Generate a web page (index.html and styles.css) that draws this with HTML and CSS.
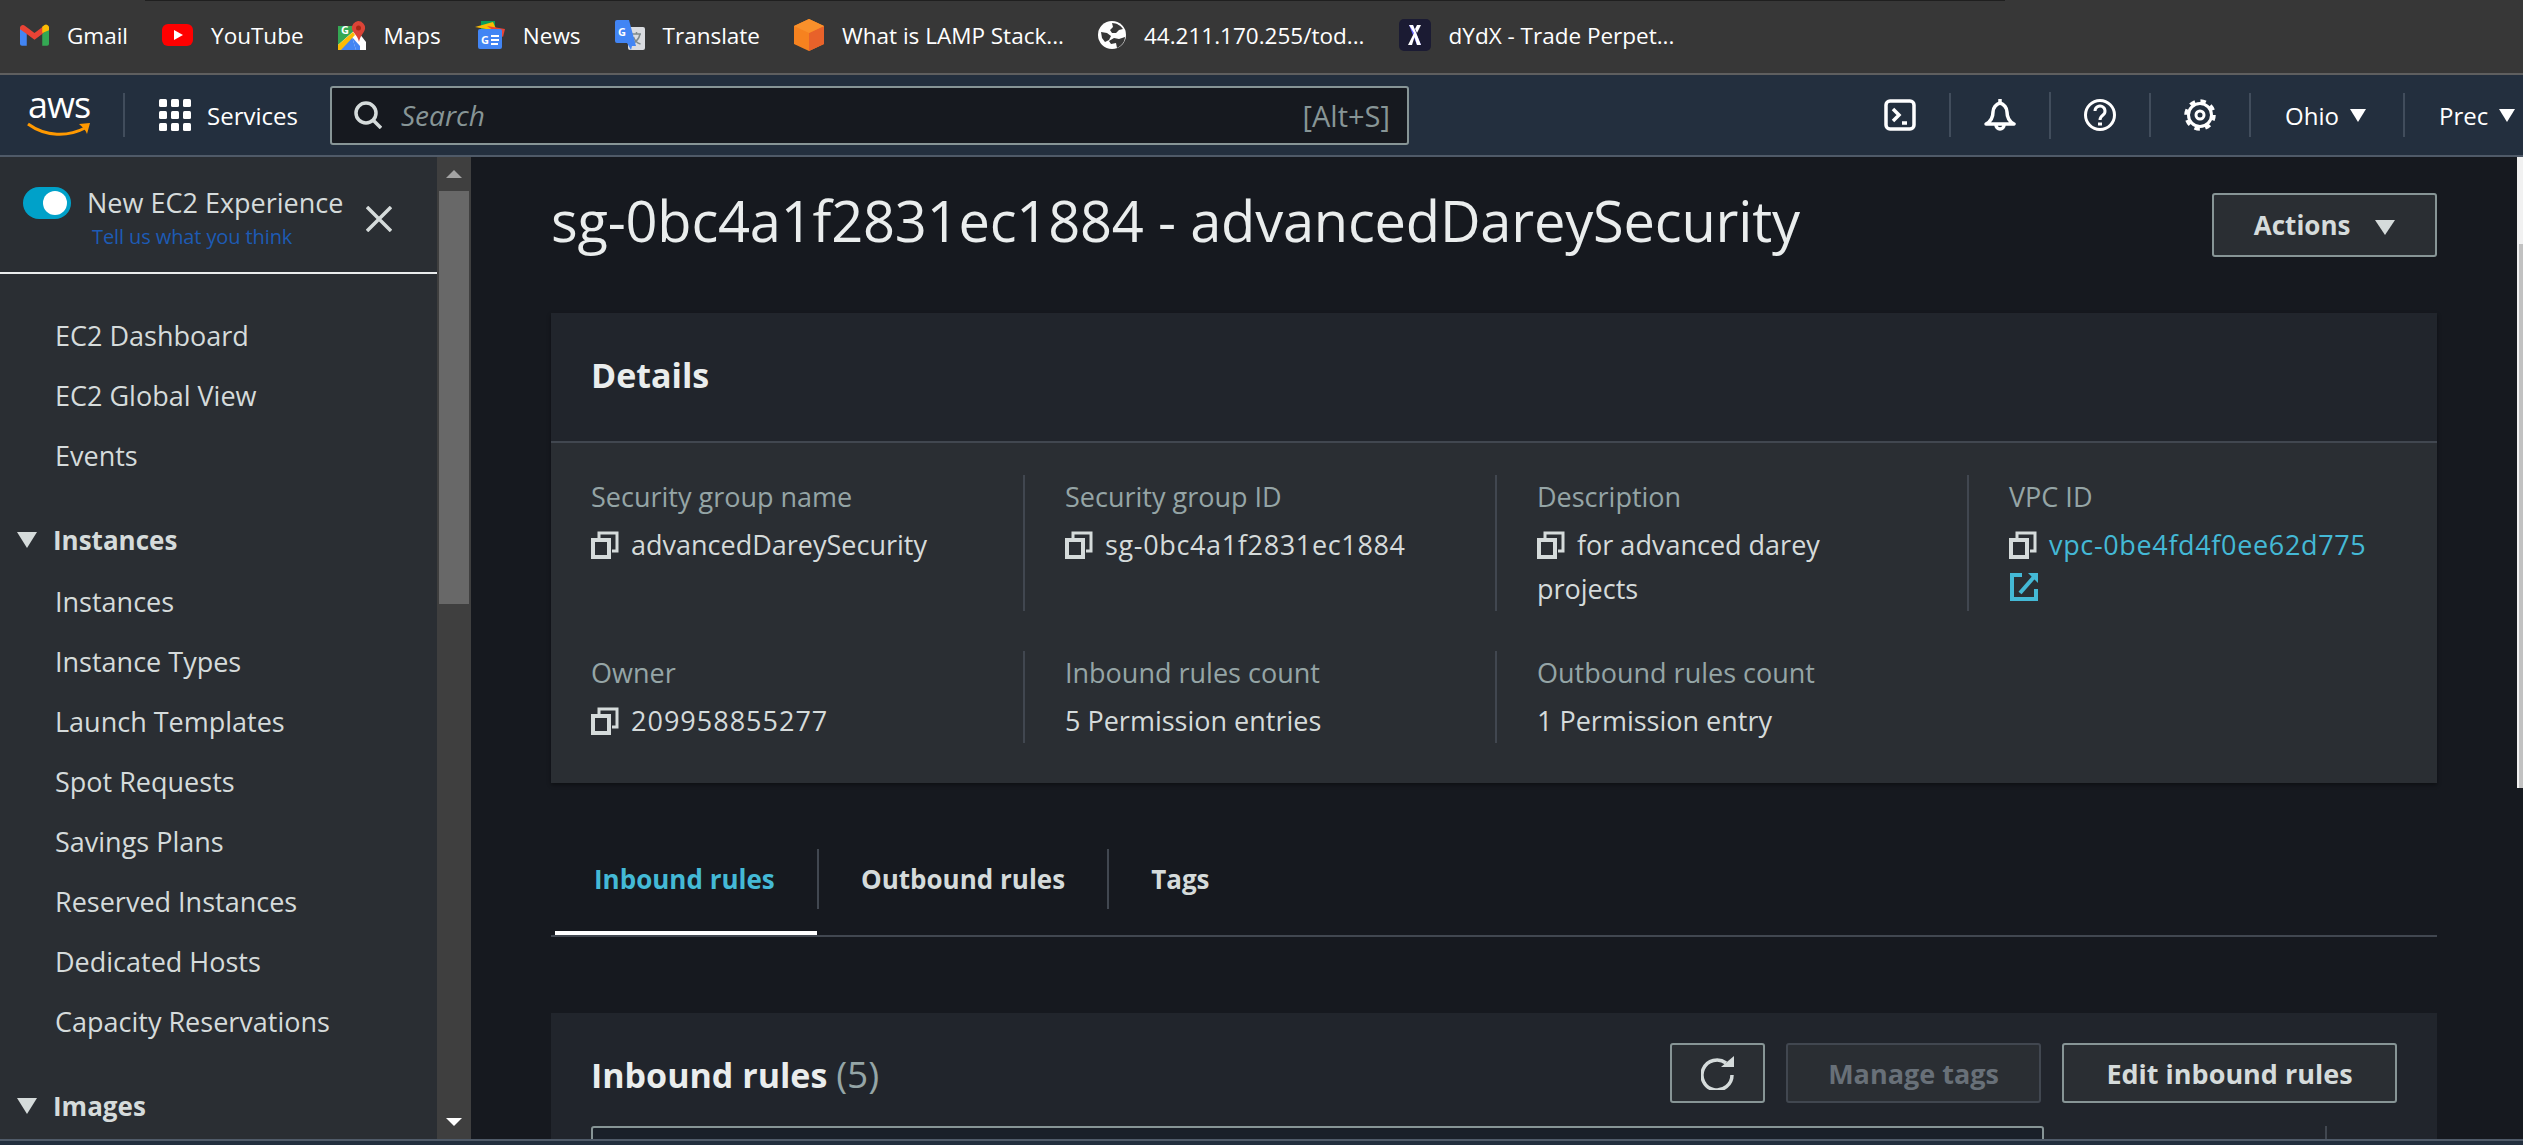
FILE: index.html
```html
<!DOCTYPE html>
<html lang="en">
<head>
<meta charset="UTF-8">
<meta name="viewport" content="width=device-width, initial-scale=1.0">
<title>Security group details</title>
<link rel="stylesheet" href="styles.css">
</head>
<body>
<div class="bookmarks">
    <a class="bookmark">
        <svg class="fav fav-gmail" viewBox="0 0 30 22"><path d="M0 3v17a2 2 0 0 0 2 2h5V8z" fill="#4285f4"/><path d="M23 8v14h5a2 2 0 0 0 2-2V3z" fill="#34a853"/><path d="M0 3.500a3 3 0 0 1 5-2L15 9l10-7.500a3 3 0 0 1 1 0V7l-3 3-8 6-8-6-7-5z" fill="#ea4335"/><path d="M23 9V2.500L25 1a3 3 0 0 1 5 2.500V6z" fill="#fbbc04"/></svg>
        <span>Gmail</span>
    </a>
    <a class="bookmark">
        <svg class="fav fav-yt" viewBox="0 0 31 22"><rect width="31" height="22" rx="6" fill="#f00"/><path d="M12 6l9 5-9 5z" fill="#fff"/></svg>
        <span>YouTube</span>
    </a>
    <a class="bookmark">
        <svg class="fav fav-maps" viewBox="0 0 28 29"><path d="M0 5h19v24H0z" fill="#34a853"/><path d="M0 29V24L18 8l10 13v8z" fill="#fff"/><path d="M0 29L14 16l4 13z" fill="#4285f4"/><path d="M18 29l-4-13 8 9v4z" fill="#4285f4"/><path d="M0 29v-5L15 11l2 3L3 29z" fill="#fbbc04"/><path d="M20 0a7 7 0 0 1 7 8c-1 4-5 7-6 13-1-6-6-9-7-13a7 7 0 0 1 6-8z" fill="#db4437"/><circle cx="20.500" cy="7" r="2.500" fill="#a52714"/><text x="3" y="13" class="fav-letter">G</text></svg>
        <span>Maps</span>
    </a>
    <a class="bookmark">
        <svg class="fav fav-news" viewBox="0 0 30 28"><path d="M6 0h14v8H6z" fill="#0c9d58"/><path d="M0 6l18-5 4 9z" fill="#fbbc04"/><path d="M12 5l18 3-2 8z" fill="#ea4335"/><rect x="3" y="8" width="24" height="20" rx="2" fill="#4285f4"/><text x="6" y="23" class="fav-letter">G</text><path d="M16 14h8v2h-8zM16 18h8v2h-8zM16 22h7v2h-7z" fill="#fff"/></svg>
        <span>News</span>
    </a>
    <a class="bookmark">
        <svg class="fav fav-translate" viewBox="0 0 30 30"><rect x="13" y="7" width="17" height="23" rx="2" fill="#dadce0"/><path d="M17 14h9M21.500 12v2M25 14c-1 5-4 8-8 10M18.500 17c1 3 3 6 7 7" stroke="#7f8a8c" fill="none" stroke-width="1.500"/><path d="M2 0h12l7 26h-4l-1 4-4-7H2a2 2 0 0 1-2-2V2a2 2 0 0 1 2-2z" fill="#4285f4"/><text x="3" y="16" class="fav-letter">G</text></svg>
        <span>Translate</span>
    </a>
    <a class="bookmark">
        <svg class="fav fav-lamp" viewBox="0 0 30 32"><path d="M15 0l15 7v18l-15 7L0 25V7z" fill="#f6821f"/><path d="M15 14l15-7v18l-15 7z" fill="#e8622a"/><path d="M15 0l15 7-15 7L0 7z" fill="#f9902b"/></svg>
        <span>What is LAMP Stack...</span>
    </a>
    <a class="bookmark">
        <svg class="fav fav-globe" viewBox="0 0 28 28"><circle cx="14" cy="14" r="14" fill="#fff"/><path d="M14 2c5 0 9 3 11 6l-4 1-3 3h-4l-2-3 3-3zM3 11l6 1 4 3-2 4-4 2-3-4zM27 16c0 5-4 9-8 11l-1-5-5 1-2-3 5-3 5 1z" fill="#373737"/></svg>
        <span>44.211.170.255/tod...</span>
    </a>
    <a class="bookmark">
        <svg class="fav fav-dydx" viewBox="0 0 32 32"><rect width="32" height="32" rx="5" fill="#1b1b33"/><path d="M10 6h4l8 20h-4z" fill="#6966ff"/><path d="M10 6h4l8 20h-4l-2.500-8L13 26H9l6-12z" fill="#fff"/><path d="M18 6h4l-4 8-2-4z" fill="#fff"/></svg>
        <span>dYdX - Trade Perpet...</span>
    </a>
</div>

<nav class="topnav">
    <div class="logo">
        <span class="logo-text">aws</span>
        <svg class="logo-smile" viewBox="0 0 64 14"><path d="M1 2c18 13 40 13 57 4" fill="none" stroke="#f90" stroke-width="3"/><path d="M52 2l11-1-3 11c-1-3-4-7-8-10z" fill="#f90"/></svg>
    </div>
    <div class="services">
        <svg class="grid-icon" viewBox="0 0 32 32" fill="#fff"><rect width="8" height="8" rx="1.500"/><rect x="12" width="8" height="8" rx="1.500"/><rect x="24" width="8" height="8" rx="1.500"/><rect y="12" width="8" height="8" rx="1.500"/><rect x="12" y="12" width="8" height="8" rx="1.500"/><rect x="24" y="12" width="8" height="8" rx="1.500"/><rect y="24" width="8" height="8" rx="1.500"/><rect x="12" y="24" width="8" height="8" rx="1.500"/><rect x="24" y="24" width="8" height="8" rx="1.500"/></svg>
        <span>Services</span>
    </div>
    <div class="search">
        <svg class="search-icon" viewBox="0 0 28 28"><circle cx="12" cy="12" r="10" fill="none" stroke="#d5dbdb" stroke-width="3.500"/><path d="M19 19l8 8" stroke="#d5dbdb" stroke-width="3.500"/></svg>
        <span class="search-text">Search</span>
        <span class="search-key">[Alt+S]</span>
    </div>
    <div class="nav-right">
        <div class="nav-item nav-first">
            <svg class="nav-icon" viewBox="0 0 32 32" fill="none" stroke="#fff" stroke-width="3.500"><rect x="2" y="2" width="28" height="28" rx="4"/><path d="M9 10l6 6-6 6"/><path d="M18 24h5"/></svg>
        </div>
        <div class="nav-item">
            <svg class="nav-icon" viewBox="0 0 32 32" fill="none" stroke="#fff" stroke-width="3.500"><path d="M2 25c4-2 7-5 7-12 0-4 3-8 7-9 4 1 7 5 7 9 0 7 3 10 7 12z" stroke-linejoin="round"/><path d="M16 0v4"/><path d="M12 26a4 4 0 0 0 8 0"/></svg>
        </div>
        <div class="nav-item nav-tall">
            <svg class="nav-icon" viewBox="0 0 32 32" fill="none" stroke="#fff" stroke-width="3"><circle cx="16" cy="16" r="14.500"/><path d="M11 12a5 5 0 1 1 8 4c-2 1.500-3 2.500-3 5"/><path d="M14 23.500h4v3h-4z" fill="#fff" stroke="none"/></svg>
        </div>
        <div class="nav-item">
            <svg class="nav-icon" viewBox="0 0 32 32" fill="none" stroke="#fff"><circle cx="16" cy="16" r="11.500" stroke-width="3"/><circle cx="16" cy="16" r="14" stroke-width="3.500" stroke-dasharray="5.500 5.500"/><circle cx="16" cy="16" r="4" stroke-width="3"/></svg>
        </div>
        <div class="nav-item nav-text nav-region">Ohio <i class="caret"></i></div>
        <div class="nav-item nav-text">Prec <i class="caret"></i></div>
    </div>
</nav>

<div class="page">
    <aside class="sidebar">
        <div class="exp-box">
            <span class="toggle"><i class="toggle-knob"></i></span>
            <div class="exp-text">
                <div class="exp-title">New EC2 Experience</div>
                <div class="exp-link">Tell us what you think</div>
            </div>
            <svg class="exp-close" viewBox="0 0 26 26"><path d="M1 1l24 24M25 1L1 25" stroke="#d5dbdb" stroke-width="3.500"/></svg>
        </div>
        <ul class="side-list">
            <li class="side-link">EC2 Dashboard</li>
            <li class="side-link">EC2 Global View</li>
            <li class="side-link">Events</li>
            <li class="side-head"><i class="caret caret-side"></i>Instances</li>
            <li class="side-link">Instances</li>
            <li class="side-link">Instance Types</li>
            <li class="side-link">Launch Templates</li>
            <li class="side-link">Spot Requests</li>
            <li class="side-link">Savings Plans</li>
            <li class="side-link">Reserved Instances</li>
            <li class="side-link">Dedicated Hosts</li>
            <li class="side-link">Capacity Reservations</li>
            <li class="side-head"><i class="caret caret-side"></i>Images</li>
        </ul>
    </aside>
    <div class="side-scroll">
        <div class="side-arrow"><i class="arrow-up"></i></div>
        <div class="side-thumb"></div>
        <div class="side-arrow side-arrow-down"><i class="arrow-down"></i></div>
    </div>

    <main class="main">
        <div class="title-row">
            <h1 class="page-title">sg-0bc4a1f2831ec1884 - advancedDareySecurity</h1>
            <button class="btn btn-actions">Actions <i class="caret caret-actions"></i></button>
        </div>

        <section class="card">
            <h2 class="card-head">Details</h2>
            <div class="details">
                <div class="cell">
                    <div class="label">Security group name</div>
                    <div class="value"><svg class="copy"><use href="#copy-icon"/></svg>advancedDareySecurity</div>
                </div>
                <div class="cell">
                    <div class="label">Security group ID</div>
                    <div class="value"><svg class="copy"><use href="#copy-icon"/></svg><span class="id-text">sg-0bc4a1f2831ec1884</span></div>
                </div>
                <div class="cell">
                    <div class="label">Description</div>
                    <div class="value value-wrap value-desc"><svg class="copy"><use href="#copy-icon"/></svg>for advanced darey projects</div>
                </div>
                <div class="cell">
                    <div class="label">VPC ID</div>
                    <div class="value value-wrap"><svg class="copy"><use href="#copy-icon"/></svg><a class="link id-text">vpc-0be4fd4f0ee62d775</a>
                        <svg class="ext" viewBox="0 0 28 28"><path d="M12 2H2v24h24V16" fill="none" stroke="#44b9d6" stroke-width="4"/><path d="M18 0h10v10z" fill="#44b9d6"/><path d="M24 4L10 20" stroke="#44b9d6" stroke-width="4"/></svg>
                    </div>
                </div>
                <div class="cell">
                    <div class="label">Owner</div>
                    <div class="value"><svg class="copy"><use href="#copy-icon"/></svg><span class="owner-id">209958855277</span></div>
                </div>
                <div class="cell">
                    <div class="label">Inbound rules count</div>
                    <div class="value">5 Permission entries</div>
                </div>
                <div class="cell">
                    <div class="label">Outbound rules count</div>
                    <div class="value">1 Permission entry</div>
                </div>
            </div>
        </section>

        <div class="tabs">
            <a class="tab tab-active">Inbound rules</a>
            <a class="tab">Outbound rules</a>
            <a class="tab">Tags</a>
        </div>

        <section class="card card-rules">
            <div class="rules-head">
                <h2 class="rules-title">Inbound rules <span class="count">(5)</span></h2>
                <div class="rules-btns">
                    <button class="btn btn-icon"><svg class="refresh" viewBox="0 0 34 34"><path d="M25 7A15 15 0 1 0 31 19" fill="none" stroke="#d5dbdb" stroke-width="3.500"/><path d="M20 11h13V0z" fill="#d5dbdb"/></svg></button>
                    <button class="btn btn-disabled">Manage tags</button>
                    <button class="btn btn-edit">Edit inbound rules</button>
                </div>
            </div>
            <div class="rules-filter">
                <div class="filter-box"></div>
                <div class="filter-line"></div>
            </div>
        </section>
    </main>

    <div class="page-scroll"><div class="page-thumb"></div></div>
</div>
<div class="bottom-bar"></div>

<svg class="defs" width="0" height="0">
    <symbol id="copy-icon" viewBox="0 0 28 28">
        <rect x="2" y="9" width="16" height="17" fill="none" stroke="#d5dbdb" stroke-width="4"/>
        <path d="M8 7V2h18v18h-5" fill="none" stroke="#d5dbdb" stroke-width="3"/>
    </symbol>
</svg>
</body>
</html>
```

FILE: styles.css
```css
* {
    box-sizing: border-box;
}
body {
    margin: 0;
    height: 1145px;
    display: flex;
    flex-direction: column;
    overflow: hidden;
    background-color: #16191f;
    color: #d5dbdb;
    font-family: "Open Sans", "Noto Sans", sans-serif;
    font-size: 27px;
}
h1, h2, ul {
    margin: 0;
    padding: 0;
}
button {
    font-family: inherit;
}

/* browser bookmarks */
.bookmarks {
    position: relative;
    height: 75px;
    flex: none;
    display: flex;
    align-items: center;
    padding: 0 0 3px 20px;
    gap: 34px;
    background-color: #373737;
    border-bottom: 2px solid #5f5f5f;
    color: #fff;
    font-size: 22.5px;
}
.bookmarks:before {
    content: "";
    position: absolute;
    top: 0;
    left: 145px;
    width: 1860px;
    height: 1px;
    background-color: #1f1f1f;
}
.bookmark {
    display: flex;
    align-items: center;
    gap: 18px;
    white-space: nowrap;
}
.fav {
    flex: none;
}
.fav-gmail { width: 29px; height: 22px; }
.fav-yt { width: 31px; height: 22px; }
.fav-maps { width: 28px; height: 29px; }
.fav-news { width: 30px; height: 28px; }
.fav-translate { width: 30px; height: 30px; }
.fav-lamp { width: 30px; height: 32px; }
.fav-globe { width: 28px; height: 28px; }
.fav-dydx { width: 32px; height: 32px; }
.fav-letter {
    font-size: 11px;
    font-weight: 700;
    fill: #fff;
}

/* aws top bar */
.topnav {
    height: 82px;
    flex: none;
    display: flex;
    align-items: center;
    background-color: #232f3e;
    border-bottom: 2px solid #4f5a68;
    color: #fff;
    font-size: 24px;
}
.logo {
    width: 125px;
    height: 44px;
    flex: none;
    padding-left: 27px;
    position: relative;
    border-right: 2px solid #414d5c;
}
.logo-text {
    display: block;
    font-size: 36px;
    line-height: 36px;
    letter-spacing: -1px;
    padding-left: 1px;
    margin-top: -6px;
}
.logo-smile {
    display: block;
    width: 64px;
    height: 14px;
    margin-top: -1px;
}
.services {
    width: 205px;
    flex: none;
    display: flex;
    align-items: center;
    gap: 16px;
    padding-left: 34px;
}
.grid-icon {
    width: 32px;
    height: 32px;
    flex: none;
}
.search {
    width: 1079px;
    height: 59px;
    flex: none;
    display: flex;
    align-items: center;
    padding: 0 17px 0 22px;
    background-color: #16191f;
    border: 2px solid #879596;
    border-radius: 3px;
    color: #879596;
}
.search-icon {
    width: 28px;
    height: 28px;
    flex: none;
    margin-right: 19px;
}
.search-text {
    font-style: italic;
    font-size: 28px;
    flex: 1;
}
.search-key {
    font-size: 29px;
}
.nav-right {
    flex: 1;
    display: flex;
    align-items: center;
    margin-left: 441px;
}
.nav-item {
    width: 100px;
    height: 44px;
    flex: none;
    display: flex;
    align-items: center;
    justify-content: center;
    border-left: 2px solid #414d5c;
}
.nav-first {
    width: 99px;
    border-left: none;
}
.nav-tall {
    height: 47px;
}
.nav-icon {
    width: 32px;
    height: 32px;
}
.nav-text {
    width: auto;
    justify-content: flex-start;
    padding-left: 34px;
    gap: 11px;
}
.nav-region {
    width: 154px;
}

/* small filled triangles */
.caret {
    display: inline-block;
    width: 0;
    height: 0;
    border-left: 8px solid transparent;
    border-right: 8px solid transparent;
    border-top: 13px solid #fff;
}
.caret-side {
    position: absolute;
    left: 17px;
    top: 22px;
    border-left-width: 10px;
    border-right-width: 10px;
    border-top: 16px solid #d5dbdb;
}
.caret-actions {
    margin-left: 18px;
    border-left-width: 10px;
    border-right-width: 10px;
    border-top: 15px solid #d5dbdb;
}

/* page columns */
.page {
    flex: 1;
    display: flex;
    min-height: 0;
}
.sidebar {
    width: 437px;
    flex: none;
    overflow: hidden;
    background-color: #2a2e33;
    font-size: 27px;
}
.exp-box {
    height: 117px;
    display: flex;
    padding: 29px 0 0 23px;
    border-bottom: 2px solid #eaeded;
}
.toggle {
    width: 48px;
    height: 32px;
    flex: none;
    position: relative;
    margin: 1px 16px 0 0;
    border-radius: 16px;
    background-color: #00a1c9;
}
.toggle-knob {
    position: absolute;
    right: 4px;
    top: 4px;
    width: 24px;
    height: 24px;
    border-radius: 50%;
    background-color: #fff;
}
.exp-text {
    width: 279px;
    flex: none;
    line-height: 34px;
    white-space: nowrap;
}
.exp-link {
    padding-left: 5px;
    color: #1d5bb5;
    font-size: 20px;
    letter-spacing: -0.1px;
}
.exp-close {
    width: 26px;
    height: 26px;
    margin-top: 20px;
}
.side-list {
    list-style: none;
    padding-top: 32px;
}
.side-link {
    height: 60px;
    line-height: 60px;
    padding-left: 55px;
    white-space: nowrap;
}
.side-head {
    position: relative;
    height: 60px;
    line-height: 60px;
    margin: 24px 0 2px;
    padding-left: 53px;
    font-size: 26px;
    font-weight: 700;
}
.side-scroll {
    width: 34px;
    flex: none;
    display: flex;
    flex-direction: column;
    background-color: #3f3f3f;
}
.side-arrow {
    height: 34px;
    flex: none;
    display: flex;
    align-items: center;
    justify-content: center;
}
.side-arrow-down {
    margin-top: auto;
}
.arrow-up {
    border-left: 8px solid transparent;
    border-right: 8px solid transparent;
    border-bottom: 8px solid #a3a3a3;
}
.arrow-down {
    border-left: 8px solid transparent;
    border-right: 8px solid transparent;
    border-top: 8px solid #fff;
}
.side-thumb {
    height: 413px;
    margin: 0 2px;
    background-color: #686868;
}

/* main column */
.main {
    flex: 1;
    min-width: 0;
    overflow: hidden;
    padding: 36px 80px 0;
}
.title-row {
    height: 64px;
    display: flex;
    align-items: center;
    justify-content: space-between;
}
.page-title {
    padding-bottom: 10px;
    font-size: 56px;
    font-weight: 400;
    letter-spacing: -0.2px;
    color: #eaeded;
    white-space: nowrap;
}
.btn {
    height: 60px;
    padding: 0 40px;
    background-color: #2a2e33;
    border: 2px solid #879596;
    border-radius: 3px;
    color: #d5dbdb;
    font-size: 26px;
    font-weight: 700;
}
.btn-actions {
    width: 225px;
    height: 64px;
    padding: 0;
}
.rules-btns .btn {
    font-size: 27px;
}
.btn-icon {
    width: 95px;
    padding: 0;
    display: flex;
    align-items: center;
    justify-content: center;
}
.btn-disabled {
    width: 255px;
    padding: 0;
    border-color: #414750;
    color: #687078;
}
.btn-edit {
    width: 335px;
    padding: 0;
}
.refresh {
    width: 34px;
    height: 34px;
}
.card {
    margin-top: 56px;
    background-color: #2a2e33;
    box-shadow: 0 2px 4px rgba(0, 0, 0, 0.4);
}
.card-head {
    height: 130px;
    padding: 0 40px;
    line-height: 124px;
    background-color: #21252c;
    border-bottom: 2px solid #414750;
    color: #eaeded;
    font-size: 34px;
}
.details {
    display: grid;
    grid-template-columns: 472px 472px 472px 470px;
    row-gap: 40px;
    padding: 32px 0 40px;
}
.cell {
    padding: 0 30px 0 40px;
    border-left: 2px solid #414750;
    line-height: 44px;
}
.cell:nth-child(4n+1) {
    border-left: none;
}
.cell:nth-child(4) {
    padding-right: 0;
}
.label {
    color: #95a5a6;
    margin-bottom: 4px;
}
.value {
    white-space: nowrap;
}
.value-wrap {
    white-space: normal;
}
.value-desc {
    max-width: 340px;
}
.id-text {
    letter-spacing: 0.65px;
}
.owner-id {
    letter-spacing: 1px;
}
.copy {
    width: 28px;
    height: 28px;
    margin-right: 12px;
    vertical-align: -4px;
}
.link {
    color: #44b9d6;
}
.ext {
    display: block;
    width: 28px;
    height: 28px;
    margin: 6px 0 0 1px;
}
.defs {
    position: absolute;
}

/* tabs */
.tabs {
    height: 154px;
    display: flex;
    padding: 66px 0 0 4px;
    border-bottom: 2px solid #414750;
    font-size: 26px;
    font-weight: 700;
}
.tab {
    position: relative;
    height: 60px;
    line-height: 60px;
    padding: 0 42px;
    border-left: 2px solid #414750;
}
.tab-active {
    width: 262px;
    padding: 0 0 0 39px;
    border-left: none;
    color: #44b9d6;
}
.tab-active:after {
    content: "";
    position: absolute;
    left: 0;
    right: 0;
    top: 82px;
    height: 4px;
    background-color: #fff;
}

/* rules table */
.card-rules {
    margin-top: 76px;
    height: 140px;
    padding: 30px 40px 0 40px;
    background-color: #21252c;
    box-shadow: none;
}
.rules-head {
    height: 60px;
    display: flex;
    align-items: center;
    justify-content: space-between;
}
.rules-title {
    color: #eaeded;
    font-size: 34px;
}
.count {
    color: #95a5a6;
    font-size: 37px;
    font-weight: 400;
}
.rules-btns {
    display: flex;
    gap: 21px;
}
.rules-filter {
    display: flex;
    margin-top: 23px;
}
.filter-box {
    width: 1453px;
    height: 40px;
    background-color: #1a2029;
    border: 2px solid #879596;
    border-radius: 3px;
}
.filter-line {
    width: 2px;
    height: 40px;
    margin-left: 281px;
    background-color: #414750;
}

/* browser scrollbar */
.page-scroll {
    width: 6px;
    height: 631px;
    flex: none;
    padding-top: 87px;
    background-color: #f1f1f1;
}
.page-thumb {
    height: 100%;
    margin-left: 2px;
    background-color: #c1c1c1;
}
.bottom-bar {
    height: 6px;
    flex: none;
    background-color: #232f3e;
    border-top: 2px solid #4f5a68;
}
```
